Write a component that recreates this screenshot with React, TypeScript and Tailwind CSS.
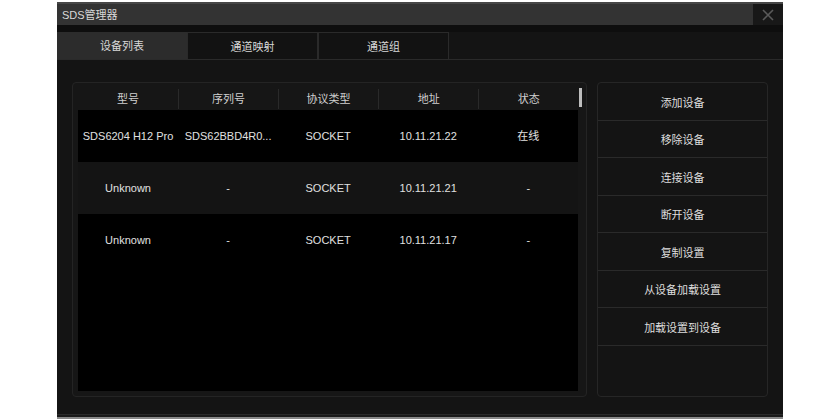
const columns = ['型号', '序列号', '协议类型', '地址', '状态'];

const rows = [
  ['SDS6204 H12 Pro', 'SDS62BBD4R0...', 'SOCKET', '10.11.21.22', '在线'],
  ['Unknown', '-', 'SOCKET', '10.11.21.21', '-'],
  ['Unknown', '-', 'SOCKET', '10.11.21.17', '-'],
];

const actions = ['添加设备', '移除设备', '连接设备', '断开设备', '复制设置', '从设备加载设置', '加载设置到设备'];

const tabs = ['设备列表', '通道映射', '通道组'];

export default function App() {
  return (
    <div
      className="h-[420px] w-[840px] overflow-hidden bg-white pl-[57px] pt-[2px] text-[11px] text-[#dcdcdc]"
      style={{ fontFamily: '"Liberation Sans", "Noto Sans CJK SC", sans-serif' }}
    >
      <div className="flex h-[417px] w-[726px] flex-col border-b-[2px] border-b-[#8a8a8a] bg-[#141414]">
        {/* title bar */}
        <div className="flex h-[23px] items-stretch border-t-[2px] border-t-[#474747] bg-[#333333]">
          <div className="flex flex-1 items-center pl-[5px] pt-[2px] text-[#d8d8d8]">SDS管理器</div>
          <div className="flex w-[30px] items-center justify-center bg-[#181818]">
            <svg width="12" height="12" viewBox="0 0 12 12" fill="none" stroke="#5a5a5a" strokeWidth="1.6">
              <path d="M1 1 L11 11 M11 1 L1 11" />
            </svg>
          </div>
        </div>

        {/* tabs */}
        <div className="h-[7px] bg-[#0e0e0e]" />
        <div className="flex h-[28px] border-b border-b-[#2a2a2a]">
          {tabs.map((t, i) => (
            <div
              key={t}
              className={
                i === 0
                  ? 'flex w-[130px] items-center justify-center bg-[#2c2c2c] pt-[2px] text-[#d8d8d8]'
                  : 'flex w-[131px] items-center justify-center border-l border-r border-t border-[#2a2a2a] bg-[#121212] pt-[2px] text-[#d8d8d8]'
              }
            >
              {t}
            </div>
          ))}
        </div>

        {/* content */}
        <div className="flex flex-1 gap-[10px] px-[15px] pt-[22px]">
          <div className="relative flex h-[315px] w-[516px] flex-col rounded-[4px] border border-[#242424] bg-[#161616] p-[5px]">
            <div className="flex h-[22px] pr-[3px]">
              {columns.map((c, i) => (
                <div key={c} className="flex flex-1 items-center justify-center py-[1px] text-[#cfcfcf]">
                  <div
                    className={
                      i === 0
                        ? 'flex h-full w-full items-center justify-center'
                        : 'flex h-full w-full items-center justify-center border-l border-l-[#2a2a2a]'
                    }
                  >
                    {c}
                  </div>
                </div>
              ))}
            </div>
            <div className="mr-[3px] flex flex-1 flex-col bg-black">
              {rows.map((r, ri) => (
                <div key={ri} className={ri % 2 === 1 ? 'flex h-[52px] bg-[#141414]' : 'flex h-[52px] bg-black'}>
                  {r.map((cell, ci) => (
                    <div key={ci} className="flex flex-1 items-center justify-center whitespace-nowrap text-[#e0e0e0]">
                      {cell}
                    </div>
                  ))}
                </div>
              ))}
            </div>
            <div className="absolute right-[4px] top-[5px] h-[19px] w-[3px] bg-[#bdbdbd]" />
          </div>

          <div className="flex h-[315px] w-[171px] flex-col rounded-[4px] border border-[#262626] bg-[#141414]">
            {actions.map((a) => (
              <div
                key={a}
                className="flex h-[37.5px] items-center justify-center border-b border-b-[#2a2a2a] pt-[3px] text-[#dedede]"
              >
                {a}
              </div>
            ))}
          </div>
        </div>
        <div className="h-[3px] border-t border-t-[#2a2a2a] bg-[#1a1a1a]" />
      </div>
    </div>
  );
}
